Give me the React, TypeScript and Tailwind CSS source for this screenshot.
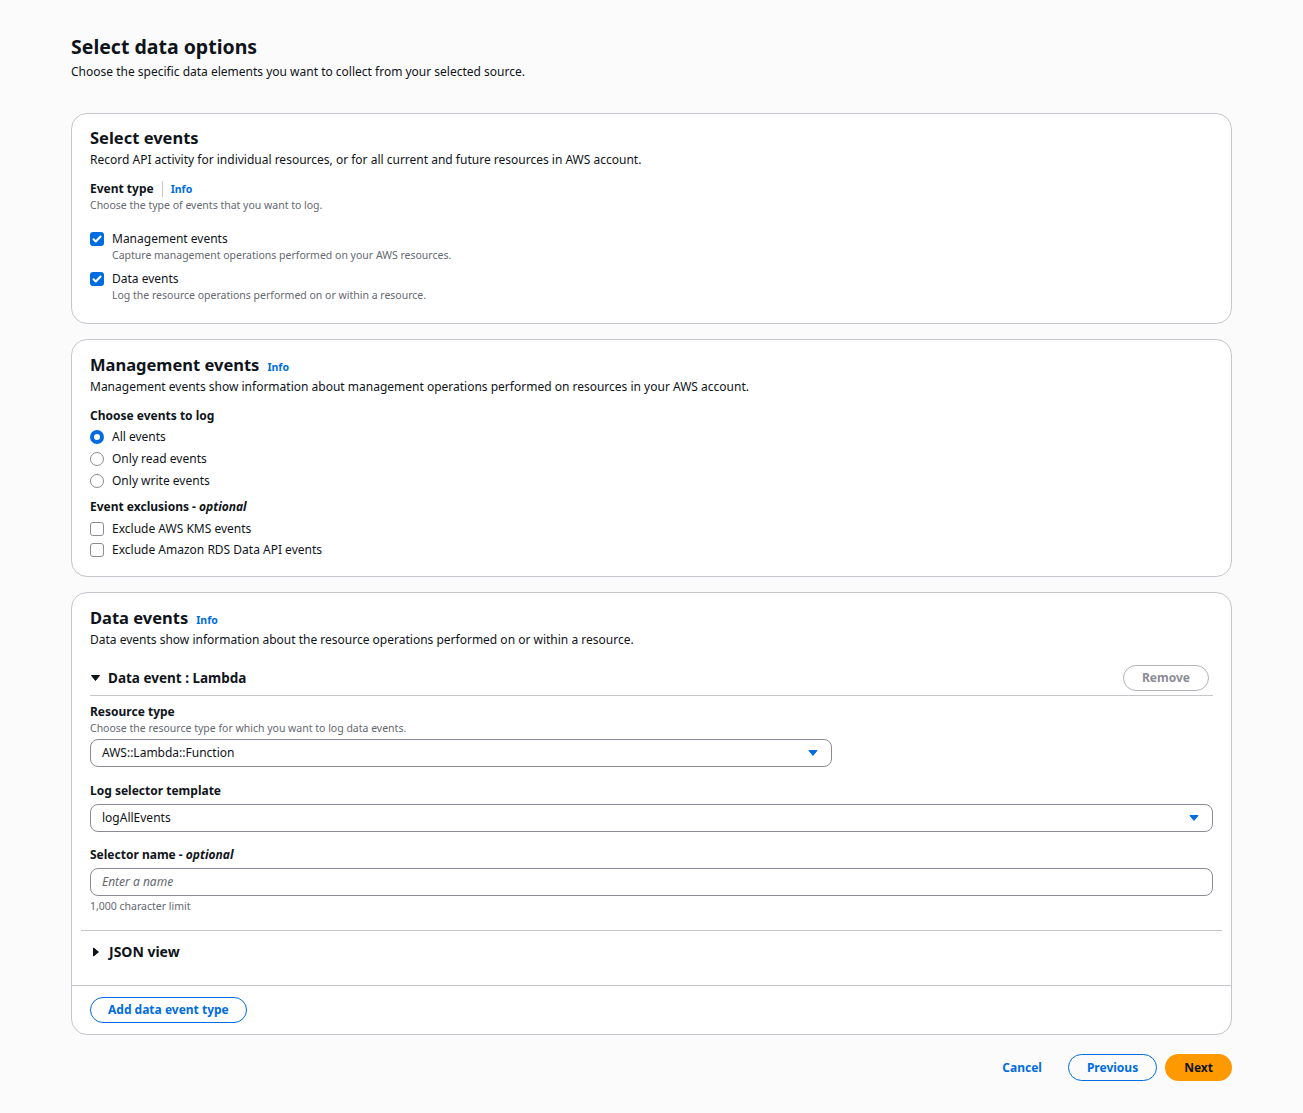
import React from 'react'

const font = { fontFamily: '"Noto Sans", "Open Sans", sans-serif' }

function CaretDown({ className = '' }: { className?: string }) {
  return (
    <svg viewBox="0 0 10 8" className={className} aria-hidden>
      <path d="M1 1.5h8L5 6.5z" fill="currentColor" stroke="currentColor" strokeWidth="1" strokeLinejoin="round" />
    </svg>
  )
}

function CaretRight({ className = '' }: { className?: string }) {
  return (
    <svg viewBox="0 0 8 10" className={className} aria-hidden>
      <path d="M1.5 1v8L6.5 5z" fill="currentColor" stroke="currentColor" strokeWidth="1" strokeLinejoin="round" />
    </svg>
  )
}

function Checkbox({ checked }: { checked: boolean }) {
  return checked ? (
    <span className="flex h-[14px] w-[14px] shrink-0 items-center justify-center rounded-[3px] bg-[#006ce0]">
      <svg viewBox="0 0 14 14" className="h-[14px] w-[14px]">
        <path d="M3.5 7.2l2.3 2.3 4.7-5" fill="none" stroke="#fff" strokeWidth="2" strokeLinecap="round" strokeLinejoin="round" />
      </svg>
    </span>
  ) : (
    <span className="h-[14px] w-[14px] shrink-0 rounded-[3px] border border-[#8c8c94] bg-white" />
  )
}

function Radio({ checked }: { checked: boolean }) {
  return checked ? (
    <span className="h-[14px] w-[14px] shrink-0 rounded-full border-[4px] border-[#006ce0] bg-white" />
  ) : (
    <span className="h-[14px] w-[14px] shrink-0 rounded-full border border-[#8c8c94] bg-white" />
  )
}

function Info({ className = '' }: { className?: string }) {
  return <span className={`text-[10.5px] font-bold leading-[16px] text-[#006ce0] ${className}`}>Info</span>
}

function Card({ children, className = '' }: { children: React.ReactNode; className?: string }) {
  return (
    <section className={`rounded-[16px] border border-[#c6c6cd] bg-white ${className}`}>{children}</section>
  )
}

function Select({ value, className = '' }: { value: string; className?: string }) {
  return (
    <div
      className={`flex h-[28px] items-center justify-between rounded-[8px] border border-[#8c8c94] bg-white pl-[11px] pr-[13px] text-[12px] text-[#0f141a] ${className}`}
    >
      <span>{value}</span>
      <CaretDown className="h-[8px] w-[10px] text-[#006ce0]" />
    </div>
  )
}

const eventTypes = [
  { label: 'Management events', desc: 'Capture management operations performed on your AWS resources.' },
  { label: 'Data events', desc: 'Log the resource operations performed on or within a resource.' },
]

const radios = ['All events', 'Only read events', 'Only write events']
const exclusions = ['Exclude AWS KMS events', 'Exclude Amazon RDS Data API events']

export default function App() {
  return (
    <div className="min-h-screen bg-[#fbfbfb] px-[71px] pb-8 pt-[34px] text-[#0f141a]" style={font}>
      <h1 className="text-[19.5px] font-bold leading-[26px]">Select data options</h1>
      <p className="mt-[4px] text-[12px] leading-[16px]">
        Choose the specific data elements you want to collect from your selected source.
      </p>

      {/* select events */}
      <Card className="mt-[33px] px-[18px] pb-[20px] pt-[13px]">
        <h2 className="text-[16.5px] font-bold leading-[22px]">Select events</h2>
        <p className="mt-[3px] text-[12px] leading-[16px]">
          Record API activity for individual resources, or for all current and future resources in AWS account.
        </p>
        <div className="mt-[13px] flex items-center text-[12px] font-bold leading-[16px]">
          <span>Event type</span>
          <span className="mx-[8px] h-[16px] w-px bg-[#c6c6cd]" />
          <Info />
        </div>
        <p className="text-[10.5px] leading-[16px] text-[#656871]">Choose the type of events that you want to log.</p>
        <div className="mt-[18px] flex flex-col gap-[8px]">
          {eventTypes.map((e) => (
            <div key={e.label} className="flex gap-[8px]">
              <div className="pt-[1px]">
                <Checkbox checked />
              </div>
              <div>
                <div className="text-[12px] leading-[16px]">{e.label}</div>
                <div className="text-[10.5px] leading-[16px] text-[#656871]">{e.desc}</div>
              </div>
            </div>
          ))}
        </div>
      </Card>

      {/* management events */}
      <Card className="mt-[15px] px-[18px] pb-[18px] pt-[14px]">
        <h2 className="text-[16.5px] font-bold leading-[22px]">
          Management events
          <Info className="ml-[8px]" />
        </h2>
        <p className="mt-[3px] text-[12px] leading-[16px]">
          Management events show information about management operations performed on resources in your AWS account.
        </p>
        <div className="mt-[13px] text-[12px] font-bold leading-[16px]">Choose events to log</div>
        <div className="mt-[5px] flex flex-col gap-[6px]">
          {radios.map((r, i) => (
            <label key={r} className="flex items-center gap-[8px] text-[12px] leading-[16px]">
              <Radio checked={i === 0} />
              {r}
            </label>
          ))}
        </div>
        <div className="mt-[10px] text-[12px] font-bold leading-[16px]">
          Event exclusions - <i>optional</i>
        </div>
        <div className="mt-[6px] flex flex-col gap-[5px]">
          {exclusions.map((x) => (
            <label key={x} className="flex items-center gap-[8px] text-[12px] leading-[16px]">
              <Checkbox checked={false} />
              {x}
            </label>
          ))}
        </div>
      </Card>

      {/* data events */}
      <Card className="mt-[15px] pb-[11px] pt-[14px]">
        <div className="px-[18px]">
          <h2 className="text-[16.5px] font-bold leading-[22px]">
            Data events
            <Info className="ml-[8px]" />
          </h2>
          <p className="mt-[3px] text-[12px] leading-[16px]">
            Data events show information about the resource operations performed on or within a resource.
          </p>

          <div className="mt-[17px] flex h-[26px] items-center justify-between">
            <div className="flex items-center gap-[7px] text-[13.5px] font-bold">
              <CaretDown className="h-[8px] w-[11px] text-[#0f141a]" />
              Data event : Lambda
            </div>
            <button className="mr-[4px] h-[26px] rounded-full border border-[#b4b4bb] px-[18px] text-[12px] font-bold text-[#8c8c94]">
              Remove
            </button>
          </div>
          <div className="mt-[4px] h-px bg-[#c6c6cd]" />

          <div className="mt-[8px] text-[12px] font-bold leading-[16px]">Resource type</div>
          <p className="text-[10.5px] leading-[16px] text-[#656871]">
            Choose the resource type for which you want to log data events.
          </p>
          <Select value="AWS::Lambda::Function" className="mt-[3px] w-[742px]" />

          <div className="mt-[16px] text-[12px] font-bold leading-[16px]">Log selector template</div>
          <Select value="logAllEvents" className="mt-[5px]" />

          <div className="mt-[15px] text-[12px] font-bold leading-[16px]">
            Selector name - <i>optional</i>
          </div>
          <div className="mt-[5px] flex h-[28px] items-center rounded-[8px] border border-[#8c8c94] bg-white px-[11px] text-[12px] italic text-[#656871]">
            Enter a name
          </div>
          <p className="mt-[3px] text-[10.5px] leading-[14px] text-[#656871]">1,000 character limit</p>
        </div>

        <div className="mx-[9px] mt-[17px] h-px bg-[#c6c6cd]" />
        <div className="mt-[13px] flex items-center gap-[9px] pl-[20px] text-[14px] font-bold leading-[16px]">
          <CaretRight className="h-[10px] w-[8px] text-[#0f141a]" />
          JSON view
        </div>

        <div className="mt-[25px] h-px bg-[#c6c6cd]" />
        <div className="px-[18px] pt-[10px]">
          <button className="h-[26px] rounded-full border border-[#006ce0] px-[17px] text-[12px] font-bold text-[#006ce0]">
            Add data event type
          </button>
        </div>
      </Card>

      <div className="mt-[19px] flex items-center justify-end gap-[8px]">
        <button className="h-[27px] px-[18px] text-[12px] font-bold text-[#006ce0]">Cancel</button>
        <button className="h-[27px] rounded-full border border-[#006ce0] px-[18px] text-[12px] font-bold text-[#006ce0]">
          Previous
        </button>
        <button className="h-[27px] rounded-full bg-[#ff9900] px-[19px] text-[12px] font-bold text-[#0f141a]">
          Next
        </button>
      </div>
    </div>
  )
}
